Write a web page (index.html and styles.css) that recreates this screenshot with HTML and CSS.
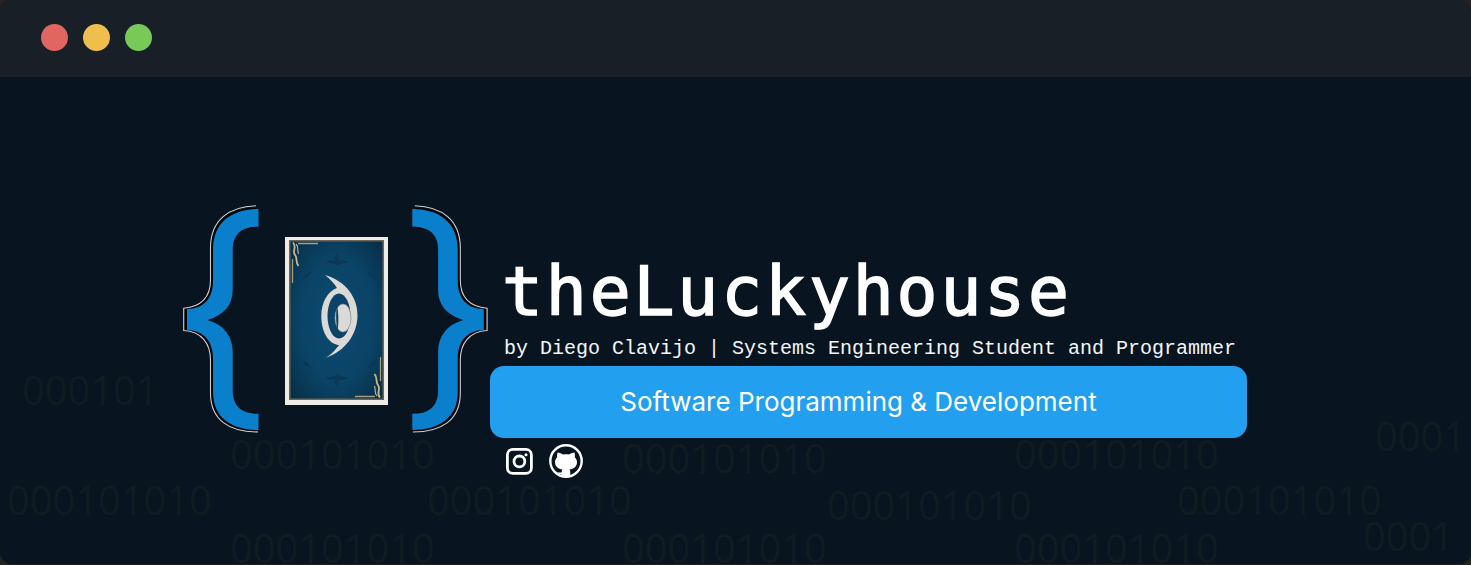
FILE: index.html
```html
<!DOCTYPE html>
<html lang="en">
<head>
<meta charset="utf-8">
<title>theLuckyhouse</title>
<link rel="stylesheet" href="styles.css">
</head>
<body>
<div class="window">
  <header class="titlebar">
    <span class="dot dot-red"></span>
    <span class="dot dot-yellow"></span>
    <span class="dot dot-green"></span>
  </header>
  <main class="hero">
    <div class="binary" aria-hidden="true">
      <span class="bit b1">000101</span>
      <span class="bit b2">000101010</span>
      <span class="bit b3">000101010</span>
      <span class="bit b4">000101010</span>
      <span class="bit b5">000101010</span>
      <span class="bit b6">000101010</span>
      <span class="bit b7">000101010</span>
      <span class="bit b8">000101010</span>
      <span class="bit b9">000101010</span>
      <span class="bit b10">000101010</span>
      <span class="bit b11">000101010</span>
      <span class="bit b12">0001</span>
      <span class="bit b13">0001</span>
    </div>
    <svg class="logo" viewBox="180 200 310 240" width="310" height="240" xmlns="http://www.w3.org/2000/svg">
      <defs>
        <radialGradient id="cardBg" cx="50%" cy="50%" r="68%">
          <stop offset="0" stop-color="#0c4c74"/>
          <stop offset="0.6" stop-color="#0a4365"/>
          <stop offset="1" stop-color="#072f48"/>
        </radialGradient>
        <path id="braceShape" d="M258.500 209C232 209 213 222 213 250V281C213 298 204 309 187 309V330C204 330 213 342 213 358V392C213 418 232 430 258.500 430V413.700C242 413.700 232.700 407 232.700 390V352C232.700 336 224 325 207.700 320C224 315 232.700 305 232.700 290V249C232.700 234 242 226.700 258.500 226.700Z"/>
        <path id="braceLine" d="M256 205.700C229 206.500 210.500 220 210.500 248V280C210.500 296 202 306.500 183.700 308.300V330.500C202 331.500 210.500 344 210.500 360V393C210.500 420 229 432 258 432"/>
        <g id="brace">
          <use href="#braceShape" transform="translate(-2.400 -1)" fill="#000"/>
          <use href="#braceShape" transform="translate(-1.500 1.500)" fill="#000"/>
          <use href="#braceLine" fill="none" stroke="#cfd1d3" stroke-width="1.100"/>
          <use href="#braceShape" fill="#0a7fcc"/>
        </g>
        <g id="corner">
          <path d="M298 243.500H318M292.500 259V283" stroke="#a99d7c" stroke-width="1.300" fill="none"/>
          <path d="M293 242.500C297 247 292.500 250 294.500 254C298 258 295 262 298.500 266" stroke="#c9b98c" stroke-width="1.800" fill="none"/>
          <path d="M296 244C299 247 297 250 298.500 254" stroke="#c9b98c" stroke-width="1.100" fill="none"/>
        </g>
        <g id="ornament" fill="#0a3856">
          <path d="M326 263C330 257 333 263 335.500 259C334.500 257 335.500 255 336.800 254C338 255 339 257 338 259C340.500 263 344 257 348 263C344 262 341 264 337 265C333 264 330 262 326 263Z"/>
          <path d="M302 279C304 275 308 274 310.500 271C311 275 307 279 302 279Z"/>
          <path d="M377 279C375 275 371 274 368.500 271C368 275 372 279 377 279Z"/>
        </g>
      </defs>
      <use href="#brace"/>
      <use href="#brace" transform="matrix(-1 0 0 1 670.800 0)"/>
      <rect x="285" y="237" width="103" height="168" fill="#efece6"/>
      <rect x="289" y="240" width="95" height="160" fill="#6b6655"/>
      <rect x="290.500" y="241.500" width="92" height="157" fill="url(#cardBg)"/>
      <use href="#corner"/>
      <use href="#corner" transform="rotate(180 336.500 320)"/>
      <use href="#ornament"/>
      <use href="#ornament" transform="matrix(1 0 0 -1 0 640)"/>
      <path d="M325 275C346 281 358 298 357.500 316C357 335 345 351 326 357.700C333 353 337 348 339 345C328 344 321.300 331 321.300 316C321.300 302 328 291 337 288C334 283 330 279 325 275Z" fill="#dcdad6"/>
      <ellipse cx="339" cy="316" rx="11.500" ry="22.500" fill="#0b4468"/>
      <ellipse cx="343" cy="318" rx="8" ry="14" fill="#dcdad6" stroke="#8b8f92" stroke-width="0.700"/>
      <path d="M337 306.500C338.700 312 338.700 324 337.500 331C335.800 323 335.800 312 337 306.500Z" fill="#0a3d5e"/>
    </svg>
    <section class="info">
      <h1 class="title">theLuckyhouse</h1>
      <p class="tagline">by Diego Clavijo | Systems Engineering Student and Programmer</p>
      <div class="banner">Software Programming &amp; Development</div>
      <nav class="social">
        <svg class="icon-ig" viewBox="0 0 27 27" width="27" height="27" xmlns="http://www.w3.org/2000/svg">
          <rect x="1.400" y="1.400" width="24" height="24" rx="5.500" fill="none" stroke="#fff" stroke-width="2.800"/>
          <circle cx="13.400" cy="13.400" r="5.400" fill="none" stroke="#fff" stroke-width="2.800"/>
          <circle cx="20" cy="6.800" r="1.500" fill="#fff"/>
        </svg>
        <svg class="icon-gh" viewBox="0 0 34 34" width="34" height="34" xmlns="http://www.w3.org/2000/svg">
          <circle cx="17" cy="17" r="15.700" fill="none" stroke="#fff" stroke-width="2.400"/>
          <path d="M8.500 8.500C10.500 8.700 12.500 9.500 14 10.500C16 10 18 10 20 10.500C21.500 9.500 23.500 8.700 25.500 8.500C26 10.500 26 12 25.800 13.200C27.200 14.500 28 16 28 18C28 22.500 25 25 20.500 25.500C21 26.300 21.300 27.200 21.300 28.500V32.500H12.700V30.500C10.500 30.800 9 29.800 8 28C9.500 28.500 11 28.800 12.700 28.300V27.800C12.800 26.800 13 26 13.500 25.500C9 25 6 22.500 6 18C6 16 6.800 14.500 8.200 13.200C8 12 8 10.500 8.500 8.500Z" fill="#fff"/>
        </svg>
      </nav>
    </section>
  </main>
</div>
</body>
</html>
```

FILE: styles.css
```css
* { box-sizing: border-box; }

html, body {
  margin: 0;
  padding: 0;
  height: 100%;
  background: #24221f;
  overflow: hidden;
}

.window {
  width: 1471px;
  height: 564px;
  border-radius: 12px;
  overflow: hidden;
  background: #08141f;
  display: flex;
  flex-direction: column;
}

.titlebar {
  height: 77px;
  flex: none;
  background: #181f27;
  display: flex;
  align-items: center;
  gap: 15px;
  padding: 0 0 3px 41px;
}

.dot {
  width: 27px;
  height: 27px;
  border-radius: 50%;
}
.dot-red { background: #e16662; }
.dot-yellow { background: #eebf4d; }
.dot-green { background: #78ca58; }

.hero {
  position: relative;
  flex: 1;
  display: flex;
  align-items: flex-start;
  padding: 123px 0 0 180px;
}

.binary {
  position: absolute;
  inset: 0;
  pointer-events: none;
}

.bit {
  position: absolute;
  font-family: "Open Sans", sans-serif;
  font-size: 39.800px;
  line-height: 54px;
  color: #101c22;
  white-space: nowrap;
}
.b1 { left: 22px; top: 286px; }
.b2 { left: 230px; top: 350px; }
.b3 { left: 622px; top: 354px; }
.b4 { left: 1014px; top: 350px; }
.b5 { left: 7px; top: 396px; }
.b6 { left: 427px; top: 396px; }
.b7 { left: 827px; top: 401px; }
.b8 { left: 1177px; top: 396px; }
.b9 { left: 230px; top: 444px; }
.b10 { left: 622px; top: 444px; }
.b11 { left: 1014px; top: 444px; }
.b12 { left: 1375px; top: 332px; }
.b13 { left: 1363px; top: 432px; }

.logo {
  position: relative;
  flex: none;
  display: block;
}

.info {
  position: relative;
  width: 757px;
  flex: none;
  padding-top: 53px;
}

.title {
  margin: 0;
  padding-left: 12px;
  font-family: "DejaVu Sans Mono", monospace;
  font-size: 68px;
  font-weight: 400;
  line-height: 78px;
  letter-spacing: 2.900px;
  color: #fff;
  -webkit-text-stroke: 1.500px #fff;
}

.tagline {
  margin: 5px 0 0;
  padding-left: 14px;
  font-family: "Liberation Mono", monospace;
  font-size: 20px;
  line-height: 26px;
  color: #f4f6f8;
  white-space: nowrap;
}

.banner {
  margin-top: 4px;
  height: 72px;
  padding-right: 20px;
  border-radius: 14px;
  background: #239fef;
  color: #fff;
  font-family: Inter, sans-serif;
  font-size: 26px;
  padding-bottom: 2px;
  display: flex;
  align-items: center;
  justify-content: center;
}

.social {
  display: flex;
  align-items: center;
  gap: 16px;
  padding: 6px 0 0 16px;
}
.social svg { display: block; flex: none; }
```
